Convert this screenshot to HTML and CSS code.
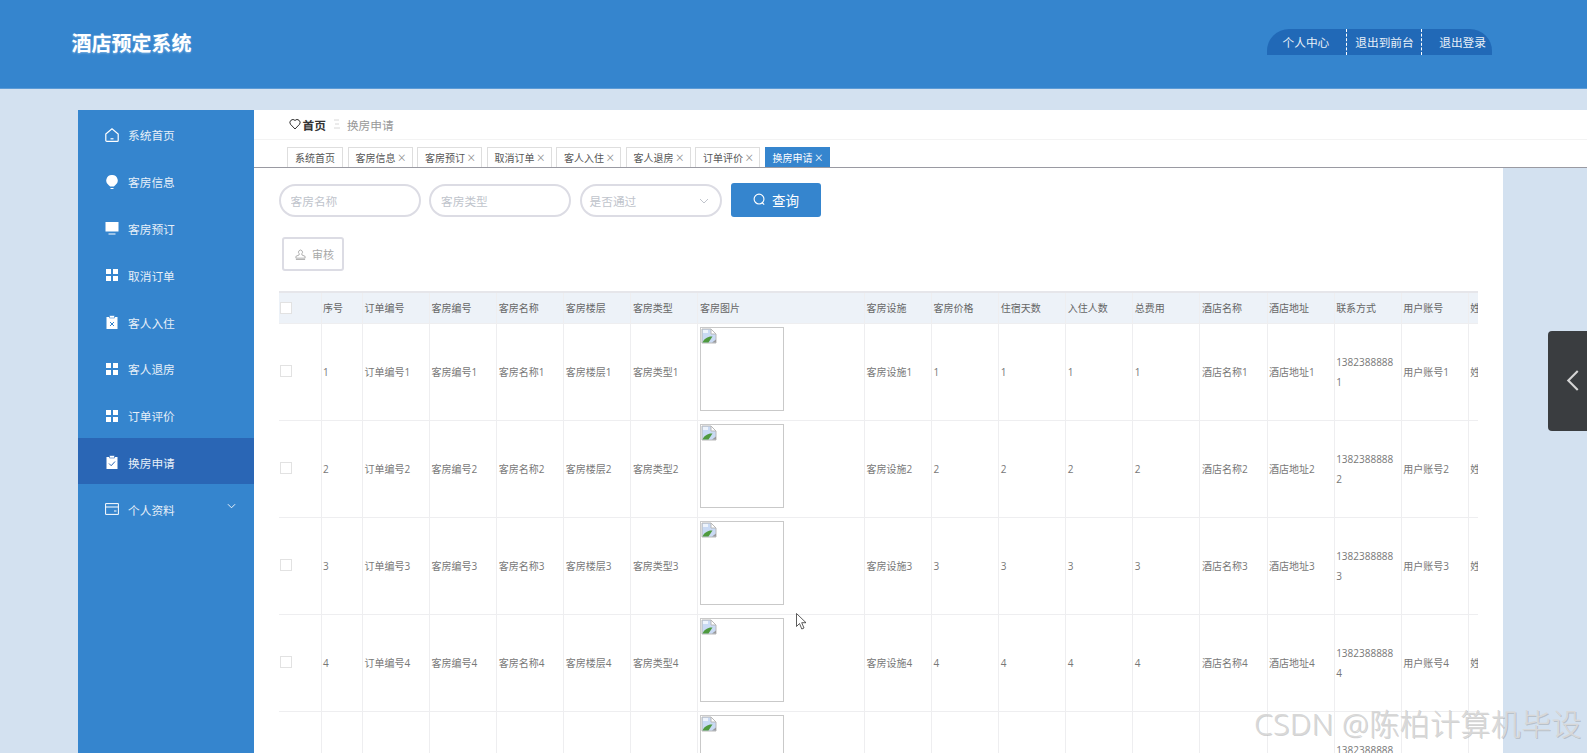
FILE: index.html
```html
<!DOCTYPE html>
<html lang="zh">
<head>
<meta charset="utf-8">
<title>酒店预定系统</title>
<link rel="stylesheet" href="styles.css">
</head>
<body>
<svg class="defs" width="0" height="0" aria-hidden="true">
  <symbol id="i-grid" viewBox="0 0 14 14"><path fill="#fff" d="M1 1h5v5H1zM8 1h5v5H8zM1 8h5v5H1zM8 8h5v5H8z"/></symbol>
  <symbol id="i-broken" viewBox="0 0 16 16"><path d="M1 1h9l5 5v9H1z" fill="#c9daf4" stroke="#b8b8b8"/><path d="M2 2h5v3H2z" fill="#eef4fc"/><path d="M10 1v5h5z" fill="#fff" stroke="#b8b8b8"/><path d="M1.500 14.500c1.500-4 6-6.500 10-6l-4 6z" fill="#4f9a3e"/><path d="M11 14.500h4v-3z" fill="#9a9a9a"/></symbol>
</svg>
<header class="topbar">
  <h1 class="brand">酒店预定系统</h1>
  <nav class="usernav">
    <a class="un un-a">个人中心</a>
    <a class="un un-b">退出到前台</a>
    <a class="un un-c">退出登录</a>
  </nav>
</header>
<div class="layout">
  <aside class="side">
    <ul class="menu">
      <li class="mi"><svg class="mico" viewBox="0 0 14 14"><path d="M.8 6 7 .9 13.200 6v6.400a1 1 0 0 1-1 1H1.800a1 1 0 0 1-1-1z" fill="none" stroke="#fff" stroke-width="1.200"/><path d="M5.500 10.800h3" stroke="#fff" stroke-width="1.200"/></svg><span>系统首页</span></li>
      <li class="mi"><svg class="mico" viewBox="0 0 14 14"><path d="M7 0a5.600 5.600 0 0 1 3 10.400c-.5.4-1 .8-1 1.200H5c0-.4-.5-.8-1-1.200A5.600 5.600 0 0 1 7 0z" fill="#fff"/><path d="M5.500 13h3v1h-3z" fill="#fff"/></svg><span>客房信息</span></li>
      <li class="mi"><svg class="mico" viewBox="0 0 14 14"><path d="M.5 1h13v9.500H.5zM3.500 12.500h7v1h-7z" fill="#fff"/></svg><span>客房预订</span></li>
      <li class="mi"><svg class="mico"><use href="#i-grid"/></svg><span>取消订单</span></li>
      <li class="mi"><svg class="mico" viewBox="0 0 14 14"><path d="M1.500 2h11v12h-11z" fill="#fff"/><path d="M4.500 .5h5V3h-5z" fill="#fff" stroke="#3585ce" stroke-width=".6"/><path d="m5 7 4 4M9 7l-4 4" stroke="#3585ce"/></svg><span>客人入住</span></li>
      <li class="mi"><svg class="mico"><use href="#i-grid"/></svg><span>客人退房</span></li>
      <li class="mi"><svg class="mico"><use href="#i-grid"/></svg><span>订单评价</span></li>
      <li class="mi mi-on"><svg class="mico" viewBox="0 0 14 14"><path d="M1.500 2h11v12h-11z" fill="#fff"/><path d="M4.500 .5h5V3h-5z" fill="#fff" stroke="#2a66b5" stroke-width=".6"/><path d="m4 8.500 2.200 2.200L10 6.500" fill="none" stroke="#2a66b5"/></svg><span>换房申请</span></li>
      <li class="mi"><svg class="mico" viewBox="0 0 14 14"><path d="M.6 1.600h12.800v10.800H.6zM.6 5h12.800M9 9h2.500" fill="none" stroke="#fff"/></svg><span>个人资料</span><svg class="mchev" viewBox="0 0 10 6"><path d="m1 1 4 4 4-4" fill="none" stroke="#fff"/></svg></li>
    </ul>
  </aside>
  <main class="main">
    <div class="crumbs">
      <svg class="heart" viewBox="0 0 12 12"><path d="M6 11 1.400 6.200A3 3 0 0 1 6 2.400a3 3 0 0 1 4.600 3.800z" fill="none" stroke="#333"/></svg>
      <b class="c-home">首页</b>
      <svg class="c-sep" viewBox="0 0 6 10"><path d="M0 1h5M1 5h4M0 9h6" stroke="#d8d8d8"/></svg>
      <span class="c-cur">换房申请</span>
    </div>
    <div class="tabs">
      <span class="tab tab-home">系统首页</span>
      <span class="tab">客房信息<i class="x">×</i></span>
      <span class="tab">客房预订<i class="x">×</i></span>
      <span class="tab">取消订单<i class="x">×</i></span>
      <span class="tab">客人入住<i class="x">×</i></span>
      <span class="tab">客人退房<i class="x">×</i></span>
      <span class="tab">订单评价<i class="x">×</i></span>
      <span class="tab tab-on">换房申请<i class="x">×</i></span>
    </div>
    <section class="panel">
      <div class="filters">
        <input class="fld" placeholder="客房名称">
        <input class="fld" placeholder="客房类型">
        <div class="fld sel"><span>是否通过</span><svg class="selchev" viewBox="0 0 10 6"><path d="m1 1 4 4 4-4" fill="none" stroke="#c0c4cc"/></svg></div>
        <button class="btn-q"><svg class="qico" viewBox="0 0 14 14"><circle cx="6.500" cy="6.500" r="5.300" fill="none" stroke="#fff" stroke-width="1.200"/><path d="m10 10.500 2 2" stroke="#fff" stroke-width="1.200"/></svg>查询</button>
      </div>
      <button class="btn-a"><svg class="aico" viewBox="0 0 12 12"><path d="M4.500 6.500V5a2.200 2.200 0 1 1 3 0v1.500L11 8v2H1V8zM1 11.500h10" fill="none" stroke="#aaa"/></svg>审核</button>
      <div class="tablewrap">
        <table class="grid">
          <colgroup>
            <col class="c-chk"><col class="c-no"><col class="c-m"><col class="c-m"><col class="c-m"><col class="c-m"><col class="c-m"><col class="c-img"><col class="c-m"><col class="c-m"><col class="c-m"><col class="c-m"><col class="c-m"><col class="c-m"><col class="c-m"><col class="c-m"><col class="c-m"><col class="c-m">
          </colgroup>
          <thead>
            <tr><th><span class="cb"></span></th><th>序号</th><th>订单编号</th><th>客房编号</th><th>客房名称</th><th>客房楼层</th><th>客房类型</th><th>客房图片</th><th>客房设施</th><th>客房价格</th><th>住宿天数</th><th>入住人数</th><th>总费用</th><th>酒店名称</th><th>酒店地址</th><th>联系方式</th><th>用户账号</th><th>姓名</th></tr>
          </thead>
          <tbody>
            <tr><td><span class="cb"></span></td><td>1</td><td>订单编号1</td><td>客房编号1</td><td>客房名称1</td><td>客房楼层1</td><td>客房类型1</td><td class="imgcell"><div class="pic"><svg class="broken"><use href="#i-broken"/></svg></div></td><td>客房设施1</td><td>1</td><td>1</td><td>1</td><td>1</td><td>酒店名称1</td><td>酒店地址1</td><td>13823888881</td><td>用户账号1</td><td>姓名1</td></tr>
            <tr><td><span class="cb"></span></td><td>2</td><td>订单编号2</td><td>客房编号2</td><td>客房名称2</td><td>客房楼层2</td><td>客房类型2</td><td class="imgcell"><div class="pic"><svg class="broken"><use href="#i-broken"/></svg></div></td><td>客房设施2</td><td>2</td><td>2</td><td>2</td><td>2</td><td>酒店名称2</td><td>酒店地址2</td><td>13823888882</td><td>用户账号2</td><td>姓名2</td></tr>
            <tr><td><span class="cb"></span></td><td>3</td><td>订单编号3</td><td>客房编号3</td><td>客房名称3</td><td>客房楼层3</td><td>客房类型3</td><td class="imgcell"><div class="pic"><svg class="broken"><use href="#i-broken"/></svg></div></td><td>客房设施3</td><td>3</td><td>3</td><td>3</td><td>3</td><td>酒店名称3</td><td>酒店地址3</td><td>13823888883</td><td>用户账号3</td><td>姓名3</td></tr>
            <tr><td><span class="cb"></span></td><td>4</td><td>订单编号4</td><td>客房编号4</td><td>客房名称4</td><td>客房楼层4</td><td>客房类型4</td><td class="imgcell"><div class="pic"><svg class="broken"><use href="#i-broken"/></svg></div></td><td>客房设施4</td><td>4</td><td>4</td><td>4</td><td>4</td><td>酒店名称4</td><td>酒店地址4</td><td>13823888884</td><td>用户账号4</td><td>姓名4</td></tr>
            <tr><td><span class="cb"></span></td><td>5</td><td>订单编号5</td><td>客房编号5</td><td>客房名称5</td><td>客房楼层5</td><td>客房类型5</td><td class="imgcell"><div class="pic"><svg class="broken"><use href="#i-broken"/></svg></div></td><td>客房设施5</td><td>5</td><td>5</td><td>5</td><td>5</td><td>酒店名称5</td><td>酒店地址5</td><td>13823888885</td><td>用户账号5</td><td>姓名5</td></tr>
          </tbody>
        </table>
      </div>
    </section>
  </main>
</div>
<div class="drawer"><svg class="drawer-ico" viewBox="0 0 12 20"><path d="M11 1 2 10l9 9" fill="none" stroke="#d5d5d5" stroke-width="2"/></svg></div>
<svg class="cursor" viewBox="0 0 11 17"><path d="M.5.5v13l3-3 2.300 5.500 2.200-1-2.300-5.300H10z" fill="#fff" stroke="#333" stroke-width=".8"/></svg>
<div class="mark">CSDN @陈柏计算机毕设</div>
</body>
</html>
```
FILE: styles.css
```css
* { box-sizing: border-box; }
html, body { margin: 0; height: 753px; overflow: hidden; }
body {
  background: #d3e1f0;
  font-family: "Open Sans", "Noto Sans CJK SC", sans-serif;
  font-size: 11.700px;
  color: #666;
  position: relative;
}
.defs { position: absolute; }

.topbar {
  height: 88.500px;
  background: #3585ce;
  border-bottom: 1px solid #5c9bd6;
  display: flex;
  align-items: center;
  justify-content: space-between;
  padding: 0 95px 0 71.500px;
}
.brand {
  margin: 0;
  font-size: 20px;
  font-weight: 700;
  color: #fff;
  line-height: 28px;
  text-shadow: 0 1px 2px rgba(255,255,255,.35);
}
.usernav {
  display: flex;
  height: 26px;
  margin-bottom: 3.500px;
  background: #2169b7;
  border-radius: 22px 22px 0 0;
  color: #e9f1f9;
  line-height: 26px;
}
.un { display: block; white-space: nowrap; }
.un-a { padding: 0 17px 0 16px; }
.un-b { padding: 0 7.500px 0 8px; border-left: 1px dashed #fff; }
.un-c { padding: 0 6px 0 17px; border-left: 1px dashed #fff; }

.layout { display: flex; padding: 21.500px 0 0 78px; }
.side { width: 176px; height: 644px; background: #3585ce; flex: none; }
.menu { list-style: none; margin: 0; padding: 0; }
.mi {
  height: 46.800px;
  padding: 3px 18px 0 27px;
  display: flex;
  align-items: center;
  color: #e6eff8;
  white-space: nowrap;
}
.mi-on { background: #2a66b5; }
.mico { width: 14px; height: 14px; margin-right: 9px; flex: none; }
.mchev { width: 9px; height: 6px; margin-left: auto; margin-bottom: 6px; }

.main { flex: 1; min-width: 0; }
.crumbs {
  height: 29.500px;
  background: #fff;
  border-bottom: 1px solid #f3f3f3;
  padding-left: 35px;
  display: flex;
  align-items: center;
}
.heart { width: 12px; height: 12px; margin-right: 1.500px; }
.c-home { color: #333; font-weight: 700; }
.c-sep { width: 6px; height: 10px; margin: 0 7px 0 8px; }
.c-cur { color: #999; }
.tabs {
  height: 28.500px;
  background: #fff;
  border-bottom: 1px solid #9a9aa2;
  padding: 7.500px 0 0 33px;
  display: flex;
  gap: 4.500px;
  align-items: flex-end;
}
.tab {
  height: 20px;
  border: 1px solid #dedede;
  border-bottom: 0;
  padding: 0 4px 0 7px;
  font-size: 10px;
  line-height: 20px;
  color: #555;
  white-space: nowrap;
  display: flex;
}
.tab-home { padding: 0 7px; }
.tab-on { background: #3585ce; border-color: #3585ce; color: #fff; }
.x { font-style: normal; font-size: 14px; font-weight: 300; width: 11.500px; margin-left: .5px; text-align: center; line-height: 19px; color: #888; }
.tab-on .x { color: #fff; }

.panel {
  width: 1249px;
  height: 586px;
  background: #fff;
  padding: 16px 0 0 24.500px;
  overflow: hidden;
}
.filters { display: flex; gap: 8.500px; align-items: center; }
.fld {
  width: 142px;
  height: 33px;
  border: 2px solid #dcdce4;
  border-radius: 17px;
  padding: 0 10px;
  font: 11.700px "Open Sans", "Noto Sans CJK SC", sans-serif;
  color: #c0c4cc;
  background: #fff;
  outline: 0;
}
.fld::placeholder { color: #c0c4cc; opacity: 1; }
.sel { width: 142px; display: flex; align-items: center; justify-content: space-between; padding-left: 8px; }
.selchev { width: 10px; height: 6px; margin-right: 1px; }
.btn-q {
  width: 90px;
  height: 34px;
  margin: -1px 0 0 1px;
  padding-bottom: 2px;
  background: #3585ce;
  border: 0;
  border-radius: 3px;
  color: #fff;
  font: 13.500px "Open Sans", "Noto Sans CJK SC", sans-serif;
  display: flex;
  align-items: center;
  justify-content: center;
  gap: 6px;
}
.qico { width: 13px; height: 13px; }
.btn-a {
  display: flex;
  align-items: center;
  width: 62px;
  height: 34px;
  margin: 20px 0 0 3.500px;
  padding: 0 0 0 11px;
  gap: 6px;
  background: #fff;
  border: 2px solid #dcdce4;
  border-radius: 3px;
  color: #a8a8a8;
  font: 11px "Open Sans", "Noto Sans CJK SC", sans-serif;
}
.aico { width: 11px; height: 11px; }

.tablewrap {
  width: 1199px;
  margin-top: 20px;
  border-top: 2px solid #e6e6ea;
  overflow: hidden;
}
.grid {
  width: 1212px;
  table-layout: fixed;
  border-collapse: separate;
  border-spacing: 0;
  font-size: 10px;
  color: #777;
}
.c-chk { width: 43px; }
.c-no { width: 41.500px; }
.c-m { width: 67.100px; }
.c-img { width: 166.500px; }
.grid th, .grid td {
  border-right: 1px solid #eeeef0;
  border-bottom: 1px solid #eeeef0;
  padding: 0 2px 0 1.500px;
  text-align: left;
  font-weight: 400;
  overflow: hidden;
  word-break: break-all;
  line-height: 20px;
}
.grid th { height: 31px; background: #edf2f8; color: #666; }
.grid td { height: 97px; }
.grid td:first-child { padding-bottom: 2px; }
.cb {
  display: block;
  width: 12px;
  height: 12px;
  background: #fff;
  border: 1px solid #e2e2e2;
}
.imgcell.imgcell { vertical-align: top; padding: 3px 0 0 1.500px; }
.pic {
  width: 84px;
  height: 84px;
  border: 1.500px solid #c9c9c9;
  display: block;
}
.broken { display: block; width: 16px; height: 16px; }

.drawer {
  position: absolute;
  left: 1548px;
  top: 331px;
  width: 39px;
  height: 100px;
  background: #3a3d40;
  border-radius: 4px 0 0 4px;
}
.drawer-ico { position: absolute; left: 18px; top: 39px; width: 13px; height: 21px; }
.cursor { position: absolute; left: 796px; top: 613px; width: 11px; height: 17px; }
.mark {
  position: absolute;
  left: 1254px;
  top: 705px;
  font: 300 30px "Noto Sans", "Noto Sans CJK SC", sans-serif;
  letter-spacing: .4px;
  line-height: 38px;
  color: #d8d8d8;
  text-shadow: 1px 1px 0 rgba(140,140,140,.4);
  white-space: nowrap;
}
```
